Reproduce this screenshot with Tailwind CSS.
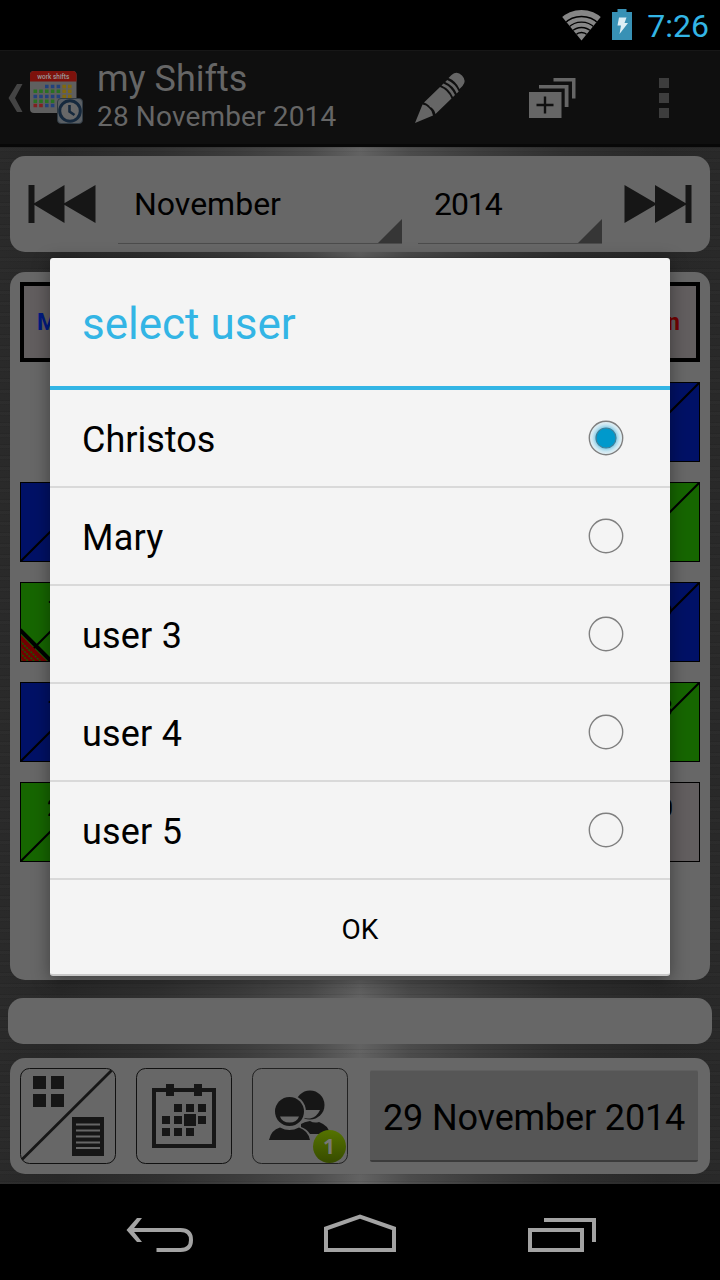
<!DOCTYPE html>
<html lang="en">
<head>
  <meta charset="UTF-8">
  <meta name="viewport" content="width=device-width, initial-scale=1.0">
  <title>my Shifts</title>
  <script src="https://cdn.jsdelivr.net/npm/@tailwindcss/browser@4"></script>
  <style>
    /* Brushed metal behind the panels */
    .metal {
      background:
        repeating-linear-gradient(180deg, rgba(0,0,0,0.07) 0 1px, rgba(255,255,255,0.012) 1px 4px, rgba(0,0,0,0.04) 4px 5px, transparent 5px 11px),
        linear-gradient(90deg, #2a2a2a 0, #282828 60px, #303030 160px, #3c3c3c 240px, #4b4b4b 310px, #626262 360px, #4b4b4b 410px, #3c3c3c 480px, #303030 560px, #282828 660px, #292929 720px);
    }
  </style>
</head>
<body class="bg-black">
  <div class="relative flex h-[1280px] w-[720px] flex-col overflow-hidden bg-black font-['Roboto',sans-serif]">

    <!-- Status bar -->
    <div class="flex h-[50px] shrink-0 items-center justify-end pr-[11px]">
      <svg class="h-[50px] w-[80px]" viewBox="560 0 80 50">
        <clipPath id="fan"><path d="M581.500 40.500 L559 13 L559 5 L604 5 L604 13 Z"/></clipPath>
        <g clip-path="url(#fan)">
          <circle cx="581.500" cy="40.500" r="30.500" fill="#868686"/>
          <g fill="none" stroke="#000" stroke-width="1.300">
            <circle cx="581.500" cy="41" r="24.500"/>
            <circle cx="581.500" cy="41" r="18.800"/>
            <circle cx="581.500" cy="41" r="13.500"/>
            <circle cx="581.500" cy="41" r="8.500"/>
          </g>
        </g>
        <path d="M612 12h5.500v-3h9v3h5.500v28h-20z" fill="#3891b5"/>
        <path d="M619 17.500h7.500l-2 5.500h3.500l-8.500 11 1.500-8.500h-3.500z" fill="#dceef5"/>
      </svg>
      <span class="ml-[7px] pt-0.5 text-[32px] leading-[50px] text-[#33b5e5]">7:26</span>
    </div>

    <!-- Action bar -->
    <div class="flex h-[97px] shrink-0 items-start border-t border-b-3 border-t-[#171717] border-b-[#080808] bg-[#0f0f0f]">
      <svg class="h-[93px] w-[97px] shrink-0" viewBox="0 51 97 93">
        <path d="M17 84h5.500l-7.500 14 7.500 14h-5.500l-8.500-14z" fill="#444"/>
        <rect x="30" y="71" width="46.500" height="42" rx="4" fill="#5f5f5f"/>
        <path d="M30 81.500v-6.500q0-4 4-4h38.500q4 0 4 4v6.500z" fill="#7d120c"/>
        <text x="53.300" y="79.300" text-anchor="middle" textLength="32" lengthAdjust="spacingAndGlyphs" font-size="6.500" font-weight="500" fill="#999">work shifts</text>
        <g fill="none" stroke-width="3.600">
          <path d="M45 86.500h3.600M50.800 86.500h3.600M56.600 86.500h3.600M33.500 96.500h3.600M39.200 96.500h3.600M45 96.500h3.600M50.800 96.500h3.600M56.600 96.500h3.600M45 105.500h3.600M50.800 105.500h3.600" stroke="#23427a"/>
          <path d="M33.500 91.300h3.600M39.200 91.300h3.600M45 91.300h3.600M50.800 91.300h3.600M56.600 91.300h3.600M33.500 101.300h3.600M39.200 101.300h3.600M45 101.300h3.600M50.800 101.300h3.600" stroke="#2a7023"/>
          <path d="M62.400 86.500h3.600M68 86.500h3.600M62.400 91.300h3.600M68 91.300h3.600M62.400 96.500h3.600M68 96.500h3.600" stroke="#80680f"/>
          <path d="M33.500 105.500h3.600M39.200 105.500h3.600" stroke="#802020"/>
        </g>
        <rect x="57.500" y="98.500" width="25" height="25" rx="3.500" fill="#5a5f64" stroke="#303a42"/>
        <circle cx="70" cy="111" r="10.300" fill="#686868" stroke="#16293d" stroke-width="3"/>
        <path d="M69.500 105v6.500l5 3.500" fill="none" stroke="#16293d" stroke-width="2.600"/>
      </svg>
      <div class="flex grow flex-col pt-[7px] text-[#666]">
        <span class="text-[36px] leading-[42px]">my Shifts</span>
        <span class="pt-px text-[28px] leading-[32px] tracking-[0.15px]">28 November 2014</span>
      </div>
      <svg class="h-[93px] w-[310px] shrink-0" viewBox="410 51 310 93">
        <!-- pencil -->
        <g fill="#666">
          <path d="M415 123l7.500-18.500 3.500 1 3 2.500 2.500 3 1.500 4.500z"/>
          <path d="M424 102.500l16-15.500q8 3 11.500 11.500l-16 15.500q-.500-3-2.500-5-1-1.500-3-2-1-2.500-6-4.500z"/>
          <path d="M448.500 78l3-3q5.500-4.500 10.500 .500 5 5.500 .500 10.500l-3 3q-3.500-8-11-11z"/>
          <path d="M441.500 85.500l2-2q8 3.500 11.500 11.500l-2 2q-3.500-8-11.500-11.500zM445.200 82l2-2q8 3.500 11.500 11.500l-2 2q-3.500-8-11.500-11.500z"/>
        </g>
        <!-- stacked cards -->
        <path d="M553.500 78h22v20.500h-3.500v-17h-18.500zM539 85h29.500v22h-3.800v-18.500h-25.700zM529 92h32.500v26h-32.500z" fill="#666"/>
        <path d="M536.500 105h17M545 96.500v17" stroke="#0f0f0f" stroke-width="2.400"/>
        <!-- overflow -->
        <path d="M659 78h10v10h-10zM659 93h10v10h-10zM659 108h10v10h-10z" fill="#3d3d3d"/>
      </svg>
    </div>

    <!-- Content -->
    <div class="metal flex h-[1037px] shrink-0 flex-col px-[10px] pt-[9px]">

      <!-- Month and year -->
      <div class="flex h-[96px] shrink-0 items-center rounded-[15px] bg-[#676767] px-[18px]">
        <svg class="h-10 w-[68px]" viewBox="0 0 68 40"><path d="M.500 1h6v38h-6zM5 20l31.500-19v38zM35 20l32.500-19v38z" fill="#161616"/></svg>
        <div class="ml-[22px] flex h-full w-[284px] flex-col">
          <div class="flex h-[88px] items-end justify-between border-b border-[#4c4c4c] pl-4">
            <span class="self-center pt-[9px] text-[32px] leading-[40px] text-black">November</span>
            <svg class="size-6" viewBox="0 0 24 24"><path d="M24 0v24h-24z" fill="#363636"/></svg>
          </div>
        </div>
        <div class="ml-4 flex h-full w-[184px] flex-col">
          <div class="flex h-[88px] items-end justify-between border-b border-[#4c4c4c] pl-4">
            <span class="self-center pt-[9px] text-[32px] leading-[40px] tracking-[-1.1px] text-black">2014</span>
            <svg class="size-6" viewBox="0 0 24 24"><path d="M24 0v24h-24z" fill="#363636"/></svg>
          </div>
        </div>
        <svg class="ml-[22px] h-10 w-[68px]" viewBox="0 0 68 40"><path d="M67.500 1h-6v38h6zM63 20l-32-19v38zM33 20l-32.500-19v38z" fill="#161616"/></svg>
      </div>

      <!-- Calendar -->
      <div class="mt-5 h-[708px] shrink-0 rounded-[15px] bg-[#676767] p-[10px]">
        <div id="calendar" class="grid grid-cols-7 gap-5"></div>
      </div>

      <div class="-mx-[2px] mt-[18px] h-[46px] shrink-0 rounded-[15px] bg-[#676767]"></div>

      <!-- Bottom toolbar -->
      <div class="mt-[14px] flex h-[116px] shrink-0 items-center rounded-[15px] bg-[#676767] px-[10px]">
        <svg class="size-24" viewBox="0 0 96 96">
          <rect x=".500" y=".500" width="95" height="95" rx="9" fill="none" stroke="#111"/>
          <path d="M2 91.500L91.500 2.500" stroke="#161616" stroke-width="2.800"/>
          <path d="M13 8h13v13h-13zM31 8h13v13h-13zM13 26h13v13h-13zM31 26h13v13h-13zM52 49h32v39h-32z" fill="#161616"/>
          <path d="M56 56.500h24M56 62.500h24M56 68.500h24M56 74.500h24M56 80h24" stroke="#666" stroke-width="2"/>
        </svg>
        <svg class="ml-5 size-24" viewBox="0 0 96 96">
          <rect x=".500" y=".500" width="95" height="95" rx="9" fill="none" stroke="#111"/>
          <path d="M18 22h60v56h-60z" fill="none" stroke="#161616" stroke-width="4"/>
          <path d="M30 16h8v12h-8zM58 16h8v12h-8zM38 36h8v8h-8zM50 36h8v8h-8zM62 36h8v8h-8zM26 48h8v8h-8zM38 48h8v8h-8zM48 46h12v12h-12zM62 48h8v8h-8zM26 60h8v8h-8zM38 60h8v8h-8zM50 60h8v8h-8z" fill="#161616"/>
        </svg>
        <svg class="ml-5 size-24" viewBox="0 0 96 96">
          <defs><linearGradient id="badge" x2="0" y2="1"><stop stop-color="#557300"/><stop offset="1" stop-color="#374b00"/></linearGradient></defs>
          <rect x=".500" y=".500" width="95" height="95" rx="9" fill="none" stroke="#222"/>
          <g fill="#161616">
            <circle cx="58" cy="37" r="14.500"/>
            <path d="M49 56q3-2 9-3 4 2.500 9 1 9 3 11 12h-20q-3-5-9-7z"/>
            <path d="M50 42h18q-3 7-10 8.500-5 0-7-1.500z" fill="#676767"/>
            <circle cx="37.500" cy="43.500" r="16.500" fill="#676767"/>
            <circle cx="37.500" cy="43.500" r="14.500"/>
            <path d="M17 72q2-10 11-12.500 9.500 5 19 0 9 3 11 12.500z"/>
            <path d="M28 48.500h19q-2 6-9.500 6t-9.500-6z" fill="#676767"/>
          </g>
          <circle cx="77.500" cy="78.500" r="16.500" fill="url(#badge)"/>
          <text x="77" y="85.500" text-anchor="middle" font-family="Open Sans" font-size="21" font-weight="700" fill="#777">1</text>
        </svg>
        <div class="ml-[22px] h-[92px] w-[328px] rounded-[2px] border-t border-b-2 border-t-[#5f5f5f] border-b-[#3b3b3b] bg-[#565656] pt-px pl-[13px] text-[36px] leading-[92px] tracking-[-0.15px] whitespace-nowrap text-black">29 November 2014</div>
      </div>
    </div>

    <!-- Navigation bar -->
    <div class="flex h-24 shrink-0 items-center justify-center">
      <svg class="h-24 w-[520px]" viewBox="100 1184 520 96" fill="none" stroke="#a3a3a3" stroke-width="4">
        <path d="M156.500 1250h24q10.500 0 10.500-10t-10.500-10h-51"/>
        <path d="M142 1218h-5l-10.500 12 10.500 12h5l-9.500-12z" fill="#a3a3a3" stroke="none"/>
        <path d="M326 1250v-21.500l34-12 34 12v21.500z"/>
        <path d="M530 1230h52v20h-52zM544 1220h50v22"/>
      </svg>
    </div>

    <!-- Select user dialog -->
    <div class="absolute top-[258px] left-[50px] flex h-[718px] w-[620px] flex-col rounded-[3px] border-b-2 border-[#c8c8c8] bg-[#f4f4f4] text-black shadow-[0_4px_18px_rgba(0,0,0,0.4)]">
      <div class="flex h-[132px] items-center border-b-4 border-[#33b5e5] pt-1 pl-8 text-[44px] text-[#33b5e5]">select user</div>
      <div id="users"></div>
      <div class="flex grow items-center justify-center pt-1.5 text-[28px]">OK</div>
    </div>
  </div>

  <script>
    const days = ['Mon', 'Tue', 'Wed', 'Thu', 'Fri', 'Sat', 'Sun'];
    const green = '#166600', blue = '#001166', grey = '#625e5f';
    const line = '<path d="M0 80L80 0" stroke="#000" stroke-width="2"/>';
    const hatch = '<path d="M0 52L28 80H0z" fill="#720000"/><path d="M0 59l21 21M0 65l15 15M0 71l9 9M0 77l3 3" stroke="#165a00" stroke-width="1.500" stroke-dasharray="2 1"/><path d="M0 48l32 32" stroke="#000" stroke-width="4"/><path d="M.500 48v31.500h32" fill="none" stroke="#000"/>';
    const calendar = document.getElementById('calendar');

    let html = days.map((d, i) =>
      `<div class="flex h-20 items-center justify-center border-4 border-black bg-[#625e5f] pt-0.5 text-[23px] font-bold ${i > 4 ? 'text-[#720000]' : 'text-[#001a80]'}">${d}</div>`
    ).join('');
    html += '<div class="col-span-5"></div>';

    // 1 November 2014 is a Saturday
    for (let day = 1; day <= 30; day++) {
      const fill = { 2: blue, 3: blue, 9: green, 10: green, 16: blue, 17: blue, 23: green, 24: green }[day] || grey;
      html += `<div class="relative h-20 border border-black text-center text-[23px] leading-[52px] text-black" style="background:${fill}">
        <svg class="absolute -top-px -left-px size-20" viewBox="0 0 80 80">${fill === grey ? '' : line}${day === 10 ? hatch : ''}</svg>${day}</div>`;
    }
    calendar.innerHTML = html;

    document.getElementById('users').innerHTML = ['Christos', 'Mary', 'user 3', 'user 4', 'user 5'].map((name, i) =>
      `<div class="flex h-[98px] items-center justify-between border-b-2 border-[#d9d9d9] pr-[46px] pl-8 text-[36px]">
        <span class="pt-[3px] ${i ? 'tracking-[0.2px]' : ''}">${name}</span>
        <svg class="size-9" viewBox="0 0 36 36">
          <defs><radialGradient id="glow"><stop offset=".62" stop-color="#8ccfe8"/><stop offset=".8" stop-color="#c9e6f1"/><stop offset="1" stop-color="#eaf2f5"/></radialGradient></defs>
          <circle cx="18" cy="18" r="16.700" fill="${i ? 'none' : 'url(#glow)'}" stroke="#808080" stroke-width="1.400"/>
          ${i ? '' : '<circle cx="18" cy="18" r="10" fill="#0099cc" stroke="#3f7f99" stroke-width="1.200"/>'}
        </svg>
      </div>`
    ).join('');
  </script>
</body>
</html>
